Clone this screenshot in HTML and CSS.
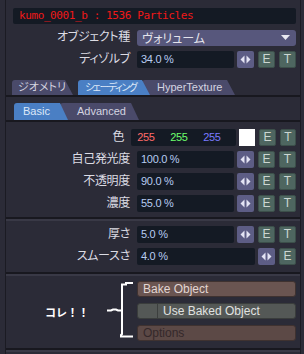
FILE: index.html
```html
<!DOCTYPE html>
<html lang="ja">
<head>
  <meta charset="UTF-8">
  <title>HyperVoxel</title>
  <link rel="stylesheet" href="styles.css">
</head>
<body>
  <div class="panel">
    <div class="title">kumo_0001_b : 1536 Particles</div>

    <div class="row">
      <span class="label">オブジェクト種</span>
      <div class="select">
        <span>ヴォリューム</span>
        <svg class="caret" width="9" height="5" viewBox="0 0 9 5"><polygon points="0,0 9,0 4.5,5" fill="#e8e8f0"/></svg>
      </div>
    </div>

    <div class="row">
      <span class="label">ディゾルブ</span>
      <div class="field">34.0 %</div>
      <span class="btn arrows"><svg width="17" height="17" viewBox="0 0 17 17"><polygon points="3.5,8.5 7.5,4.5 7.5,12.5" fill="#e4e4f4"/><polygon points="9.5,4.5 13.5,8.5 9.5,12.5" fill="#e4e4f4"/></svg></span>
      <span class="btn env">E</span>
      <span class="btn env">T</span>
    </div>

    <div class="tabs">
      <span class="tab jp geo">ジオメトリ</span>
      <span class="tab jp shade active">シェーディング</span>
      <span class="tab hyper behind">HyperTexture</span>
    </div>

    <div class="subtabs">
      <span class="tab sub basic active">Basic</span>
      <span class="tab sub adv behind">Advanced</span>
    </div>

    <div class="group first">
      <div class="row">
        <span class="label">色</span>
        <div class="field rgb"><span class="r">255</span><span class="g">255</span><span class="b">255</span></div>
        <span class="btn swatch"></span>
        <span class="btn env">E</span>
        <span class="btn env">T</span>
      </div>
      <div class="row">
        <span class="label">自己発光度</span>
        <div class="field">100.0 %</div>
        <span class="btn arrows"><svg width="17" height="17" viewBox="0 0 17 17"><polygon points="3.5,8.5 7.5,4.5 7.5,12.5" fill="#e4e4f4"/><polygon points="9.5,4.5 13.5,8.5 9.5,12.5" fill="#e4e4f4"/></svg></span>
        <span class="btn env">E</span>
        <span class="btn env">T</span>
      </div>
      <div class="row">
        <span class="label">不透明度</span>
        <div class="field">90.0 %</div>
        <span class="btn arrows"><svg width="17" height="17" viewBox="0 0 17 17"><polygon points="3.5,8.5 7.5,4.5 7.5,12.5" fill="#e4e4f4"/><polygon points="9.5,4.5 13.5,8.5 9.5,12.5" fill="#e4e4f4"/></svg></span>
        <span class="btn env">E</span>
        <span class="btn env">T</span>
      </div>
      <div class="row">
        <span class="label">濃度</span>
        <div class="field">55.0 %</div>
        <span class="btn arrows"><svg width="17" height="17" viewBox="0 0 17 17"><polygon points="3.5,8.5 7.5,4.5 7.5,12.5" fill="#e4e4f4"/><polygon points="9.5,4.5 13.5,8.5 9.5,12.5" fill="#e4e4f4"/></svg></span>
        <span class="btn env">E</span>
        <span class="btn env">T</span>
      </div>
    </div>

    <div class="sep"></div>

    <div class="group second">
      <div class="row">
        <span class="label">厚さ</span>
        <div class="field">5.0 %</div>
        <span class="btn arrows"><svg width="17" height="17" viewBox="0 0 17 17"><polygon points="3.5,8.5 7.5,4.5 7.5,12.5" fill="#e4e4f4"/><polygon points="9.5,4.5 13.5,8.5 9.5,12.5" fill="#e4e4f4"/></svg></span>
        <span class="btn env">E</span>
        <span class="btn env">T</span>
      </div>
      <div class="row">
        <span class="label">スムースさ</span>
        <div class="field">4.0 %</div>
        <span class="btn arrows"><svg width="17" height="17" viewBox="0 0 17 17"><polygon points="3.5,8.5 7.5,4.5 7.5,12.5" fill="#e4e4f4"/><polygon points="9.5,4.5 13.5,8.5 9.5,12.5" fill="#e4e4f4"/></svg></span>
        <span class="btn env">E</span>
      </div>
    </div>

    <div class="sep"></div>

    <div class="bake">
      <div class="note">
        <span class="note-text">コレ！！</span>
        <svg class="bracket" width="32" height="60" viewBox="0 0 32 60">
          <polyline points="29,2 22,2 22,3.5 18,3.5 18,53 17,54 17,55.5 29,55.5" fill="none" stroke="#fff" stroke-width="2"/>
          <polyline points="3,29.5 7,29.5 9,28.5 12,28.5 14,29.5 18,29.5" fill="none" stroke="#fff" stroke-width="2"/>
        </svg>
      </div>
      <div class="bake-buttons">
        <div class="wide brown">Bake Object</div>
        <div class="wide gray"><span class="box"></span><span>Use Baked Object</span></div>
        <div class="wide brown dim">Options</div>
      </div>
    </div>

    <div class="sep"></div>
  </div>
</body>
</html>
```

FILE: styles.css
```css
body {
  margin: 0;
  background: #2b2b37;
  font-family: "Liberation Sans", "Noto Sans CJK JP", sans-serif;
  font-size: 12px;
  font-feature-settings: "palt" 1;
  color: #dcdce4;
}

.panel {
  margin-left: 5px;
  width: 296px;
  height: 354px;
  padding-top: 8px;
  box-sizing: border-box;
  border-left: 1px solid #1b1b23;
  border-right: 1px solid #1b1b23;
  overflow: hidden;
}

.title {
  margin: 0 4px 5px 7px;
  height: 16px;
  line-height: 16px;
  padding-left: 6px;
  background: #141a24;
  border-radius: 2px;
  color: #f01818;
  font-family: "DejaVu Sans Mono", monospace;
  font-size: 11px;
  letter-spacing: -0.4px;
}

.row {
  display: flex;
  align-items: center;
  height: 17px;
  margin-right: 4px;
  margin-bottom: 5px;
}

.label {
  width: 124px;
  margin-right: 7px;
  text-align: right;
  white-space: nowrap;
  letter-spacing: -0.3px;
  line-height: 17px;
}

.select {
  flex: 1;
  display: flex;
  align-items: center;
  height: 16px;
  padding-left: 5px;
  background: #57577c;
  border-radius: 3px;
  color: #e4e4ec;
}

.caret {
  margin-left: auto;
  margin-right: 6px;
}

.field {
  flex: 1;
  height: 17px;
  line-height: 17px;
  padding-left: 4px;
  background: #141a24;
  border-radius: 2px;
  color: #b8ccf2;
  font-size: 11px;
  letter-spacing: -0.3px;
}

.rgb {
  display: flex;
  padding-left: 6px;
}

.rgb span {
  width: 33px;
}

.rgb .r { color: #ff6a6a; }
.rgb .g { color: #6cff6c; }
.rgb .b { color: #7a7aff; }

.btn {
  width: 17px;
  height: 17px;
  margin-left: 4px;
  border-radius: 2px;
  box-sizing: border-box;
  text-align: center;
  line-height: 17px;
}

.arrows {
  margin-left: 3px;
  background: #5d5d85;
}

.arrows svg {
  display: block;
}

.swatch {
  margin-left: 3px;
  background: #ffffff;
  border-radius: 0;
}

.env {
  background: #4e6660;
  border: 1px solid #3c4f4a;
  color: #ccd6d2;
  line-height: 15px;
}

.tabs,
.subtabs {
  display: flex;
  align-items: flex-end;
  border-bottom: 2px solid #18181f;
}

.tabs {
  margin-top: 12px;
  padding-left: 6px;
}

.subtabs {
  margin-top: 6px;
  padding-left: 8px;
}

.tab {
  position: relative;
  z-index: 2;
  height: 15px;
  line-height: 15px;
  padding-left: 7px;
  box-sizing: border-box;
  background: #4a4a6a;
  color: #d4d4e0;
  border-radius: 3px 0 0 0;
  clip-path: polygon(0 0, calc(100% - 8px) 0, 100% 100%, 0 100%);
  white-space: nowrap;
  overflow: hidden;
  font-size: 11px;
}

.tab.geo {
  width: 61px;
  margin-right: 5px;
  padding-left: 6px;
}

.tab.shade {
  width: 72px;
  font-size: 10px;
  letter-spacing: -1.5px;
}

.tab.hyper {
  width: 93px;
  padding-left: 15px;
}

.tab.active {
  background: #4a7fc4;
  color: #dde8f8;
}

.tab.behind {
  z-index: 1;
  margin-left: -8px;
}

.tab.sub {
  height: 17px;
  line-height: 17px;
}

.tab.basic {
  width: 54px;
  padding-left: 9px;
}

.tab.adv {
  width: 79px;
  padding-left: 17px;
}

.group {
  padding-top: 7px;
}

.group .row:last-child {
  margin-bottom: 0;
}

.group.first {
  padding-bottom: 5px;
}

.group.second {
  padding-top: 5px;
  padding-bottom: 7px;
}

.sep {
  height: 2px;
  background: #18181f;
  border-bottom: 2px solid #393946;
}

.bake {
  display: flex;
  padding: 5px 4px 7px 0;
}

.note {
  width: 131px;
  display: flex;
  align-items: center;
}

.note-text {
  margin-left: 39px;
  margin-top: 2px;
  font-family: "Noto Sans CJK JP", sans-serif;
  font-feature-settings: normal;
  font-weight: bold;
  font-size: 11px;
  color: #ffffff;
}

.bracket {
  margin-left: auto;
  margin-right: 1px;
}

.bake-buttons {
  flex: 1;
  display: flex;
  flex-direction: column;
  gap: 6px;
}

.wide {
  display: flex;
  height: 16px;
  line-height: 14px;
  padding-left: 5px;
  border-radius: 3px;
  box-sizing: border-box;
}

.brown {
  background: #6a5551;
  border: 1px solid #3f3230;
  color: #e2d6d2;
}

.dim {
  background: #5c4946;
  color: #34282a;
}

.gray {
  padding-left: 0;
  background: #545856;
  border: 1px solid #3a3d3c;
  color: #e0e2e0;
}

.box {
  width: 19px;
  border-right: 1px solid #3c3f3e;
  margin-right: 5px;
}
```
